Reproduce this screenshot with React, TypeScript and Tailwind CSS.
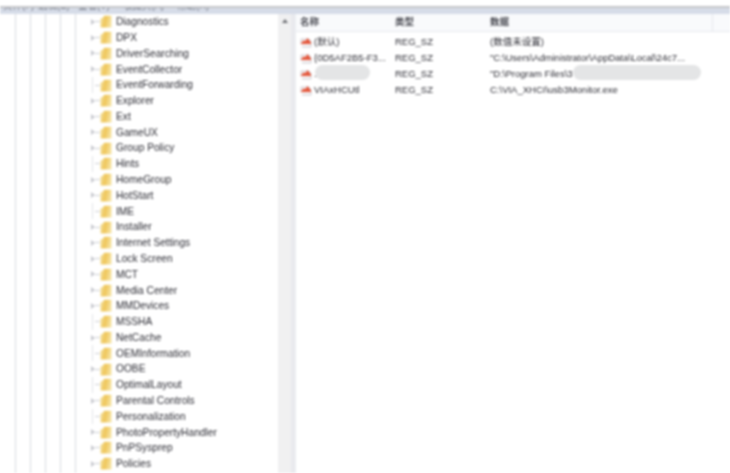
const rows: [string, boolean][] = [
  ["Diagnostics", true], ["DPX", true], ["DriverSearching", true], ["EventCollector", true], ["EventForwarding", false],
  ["Explorer", true], ["Ext", true], ["GameUX", true], ["Group Policy", true], ["Hints", false], ["HomeGroup", true],
  ["HotStart", true], ["IME", false], ["Installer", true], ["Internet Settings", true], ["Lock Screen", true], ["MCT", true],
  ["Media Center", true], ["MMDevices", true], ["MSSHA", false], ["NetCache", true], ["OEMInformation", false], ["OOBE", true],
  ["OptimalLayout", false], ["Parental Controls", true], ["Personalization", false], ["PhotoPropertyHandler", true], ["PnPSysprep", true], ["Policies", true],
];

const values = [
  { name: "(默认)", data: "(数值未设置)" },
  { name: "{0D5AF2B5-F3...", data: "\"C:\\Users\\Administrator\\AppData\\Local\\24c7..." },
  { name: ".", data: "\"D:\\Program Files\\3", hidden: true },
  { name: "VIAxHCUtl", data: "C:\\VIA_XHCI\\usb3Monitor.exe" },
];

const menus = [
  { label: "文件(F)", width: "w-[35px]" },
  { label: "编辑(E)", width: "w-[40px]" },
  { label: "查看(V)", width: "w-[45px]" },
  { label: "收藏夹(A)", width: "w-[54px]" },
  { label: "帮助(H)", width: "w-[40px]" },
];

function Folder() {
  return (
    <svg width="12" height="13" viewBox="0 0 12 13" className="shrink-0">
      <defs>
        <linearGradient id="fold" x1="0" x2="1" y1="0" y2="0.2">
          <stop offset="0" stopColor="#f3e3a6" />
          <stop offset="0.5" stopColor="#efc65a" />
          <stop offset="1" stopColor="#f5e2a0" />
        </linearGradient>
      </defs>
      <path d="M0.5 12.5 V3.5 L2.5 3 L4 0.8 H11.5 V12.5 Z" fill="url(#fold)" />
    </svg>
  );
}

function RegIcon() {
  return (
    <svg width="12" height="12" viewBox="0 0 12 12" className="shrink-0">
      <path d="M1 8 V3 H9 L11 5 V11 H2" fill="#f6f3f3" stroke="#cfcdd2" />
      <path d="M0.5 8 L3.5 4.5 L5.5 5 L7.5 2 L11 6.5 V8 Z" fill="#e4573c" />
    </svg>
  );
}

export default function App() {
  return (
    <div className="w-[730px] h-[473px] overflow-hidden bg-white font-['Liberation_Sans','Noto_Sans_CJK_SC',sans-serif] text-[#2c2c34] blur-[0.9px] flex flex-col">
      <div className="h-[6px] shrink-0" />
      <div className="h-[8px] shrink-0 overflow-hidden border-t-2 border-[#c6c7ca] bg-[#d6dce8] flex pl-[3px] text-[9.5px] leading-[12px] text-[#6f7480]">
        {menus.map((m) => (
          <span key={m.label} className={`${m.width} -mt-[8px] whitespace-nowrap`}>{m.label}</span>
        ))}
      </div>
      <div className="flex-1 min-h-0 flex">
        <div className="w-[291px] flex shrink-0">
          <div className="flex-1 min-w-0 flex">
            <div className="flex h-full">
              {[16, 15, 15, 15, 15].map((w, i) => (
                <div key={i} style={{ width: w }} className="h-full border-r border-[#d8dae0]" />
              ))}
            </div>
            <div className="pl-[14px] flex-1 min-w-0">
              {rows.map(([name, arrow]) => (
                <div key={name} className="h-[15.79px] flex items-center">
                  <div className="w-[5px] h-full flex items-center justify-center shrink-0">
                    {arrow ? (
                      <span className="w-0 h-0 border-y-[3px] border-y-transparent border-l-[4px] border-l-[#c8c9cf]" />
                    ) : (
                      <span className="w-px h-full bg-[#e2e3e6]" />
                    )}
                  </div>
                  <div className="w-[5px] h-px bg-[#d0d1d6] shrink-0" />
                  <Folder />
                  <span className="ml-[4px] text-[10.2px] whitespace-nowrap">{name}</span>
                </div>
              ))}
            </div>
          </div>
          <div className="w-[13px] bg-[#f0f0f1] flex justify-center pt-[5px]">
            <span className="w-0 h-0 border-x-[3px] border-x-transparent border-b-[4px] border-b-[#6f7075]" />
          </div>
        </div>
        <div className="w-[4px] bg-[#e9eaee] shrink-0" />
        <div className="flex-1 min-w-0 border-l border-[#eceef2]">
          <div className="h-[18px] flex items-center text-[9.5px] font-bold text-[#4a4b53] border-b border-[#e6e8ee] bg-[#f9fafc]">
            <span className="w-[94px] pl-[4px] shrink-0">名称</span>
            <span className="w-[96px] pl-[5px] shrink-0">类型</span>
            <span className="w-[227px] pl-[4px] shrink-0 border-r border-[#e6e8ee] h-full flex items-center">数据</span>
          </div>
          <div className="pt-[2px] text-[9.5px]">
            {values.map((v) => (
              <div key={v.data} className="h-[16px] flex items-center">
                <div className="w-[94px] pl-[4px] shrink-0 flex items-center relative">
                  <RegIcon />
                  <span className="ml-[2px] whitespace-nowrap">{v.name}</span>
                  {v.hidden && <span className="absolute left-[19px] top-[-2px] w-[55px] h-[15px] rounded-full bg-[#e4e5e6]" />}
                </div>
                <span className="w-[96px] pl-[5px] shrink-0">REG_SZ</span>
                <span className="pl-[4px] whitespace-nowrap relative">
                  {v.data}
                  {v.hidden && <span className="absolute left-[87px] top-[-2px] w-[128px] h-[15px] rounded-full bg-[#e4e5e6]" />}
                </span>
              </div>
            ))}
          </div>
        </div>
      </div>
    </div>
  );
}
